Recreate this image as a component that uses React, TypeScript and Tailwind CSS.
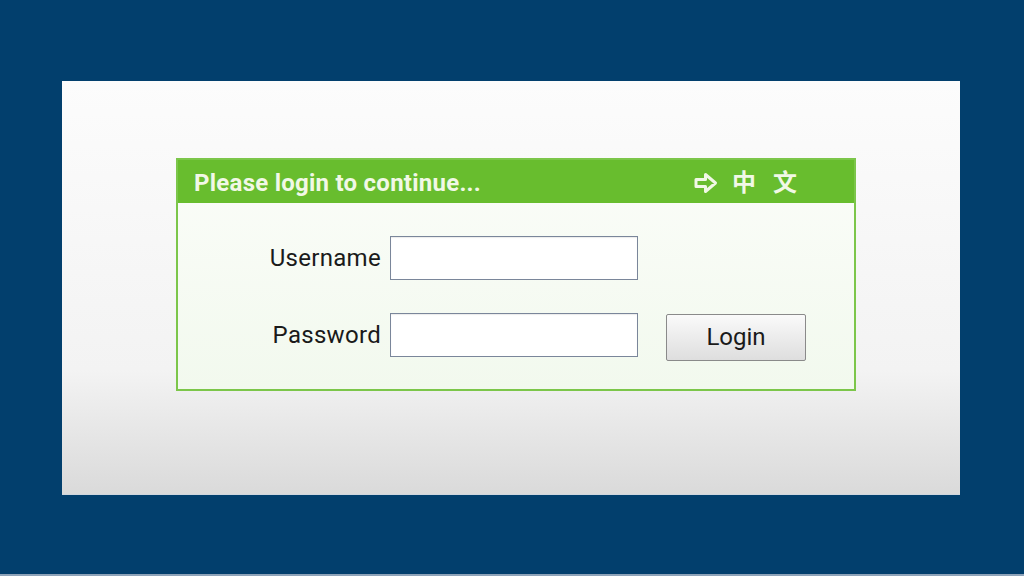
import React from "react";

const font = { fontFamily: "Roboto, 'Noto Sans CJK SC', sans-serif" };

const Field: React.FC<{ label: string; type?: string; children?: React.ReactNode }> = ({
  label,
  type = "text",
  children,
}) => {
  return (
    <div className="flex items-center h-[44px]">
      <label className="w-[212px] pr-[9px] text-right text-[24px] tracking-[0.3px] text-[#1a1a1a] leading-none">
        {label}
      </label>
      <input
        type={type}
        className="w-[248px] h-[44px] bg-white border border-[#7a869a] outline-none shadow-[inset_0_1px_1px_rgba(0,0,0,0.08)]"
      />
      {children}
    </div>
  );
};

const App: React.FC = () => {
  return (
    <div className="w-[1024px] h-[576px] flex flex-col bg-[#023f6d] overflow-hidden" style={font}>
      <div className="flex-grow pt-[81px] pl-[62px]">
        {/* Main panel */}
        <div className="w-[898px] h-[413px] pt-[77px] pl-[114px] bg-linear-to-b from-[#fcfcfc] via-[#f3f3f3] via-70% to-[#dadada] shadow-[0_1px_0_#cfd6de]">
          <div className="w-[680px] h-[233px] flex flex-col border-2 border-[#7cc64a] bg-linear-to-b from-[#fbfdf9] to-[#f2f9ee]">
            {/* Header */}
            <div className="h-[43px] flex items-center justify-between pt-[3px] pl-[16px] pr-[57px] bg-[#68bd2e] text-[#f1f8e6]">
              <span className="text-[24px] font-bold tracking-[0.25px] leading-none">Please login to continue...</span>
              <div className="flex items-center font-bold text-[24px] leading-none">
                <svg width="24" height="22" viewBox="0 0 24 22" fill="none" className="mr-[14px]">
                  <path
                    d="M2 7.5h9.5V2.5l10 8.5-10 8.5v-5H2z"
                    stroke="currentColor"
                    strokeWidth="3"
                    strokeLinejoin="round"
                  />
                </svg>
                <span className="mr-[17px]">中</span>
                <span>文</span>
              </div>
            </div>
            {/* Form */}
            <div className="flex flex-col gap-[33px] pt-[33px]">
              <Field label="Username" />
              <Field label="Password" type="password">
                <button className="ml-[28px] mt-[4px] w-[140px] h-[47px] border border-[#8a8a8a] rounded-[2px] bg-linear-to-b from-[#fafafa] to-[#dedede] text-[24px] text-[#1a1a1a]">
                  Login
                </button>
              </Field>
            </div>
          </div>
        </div>
      </div>
      <div className="h-[2px] bg-[#8ea3b9]" />
    </div>
  );
};

export default App;
